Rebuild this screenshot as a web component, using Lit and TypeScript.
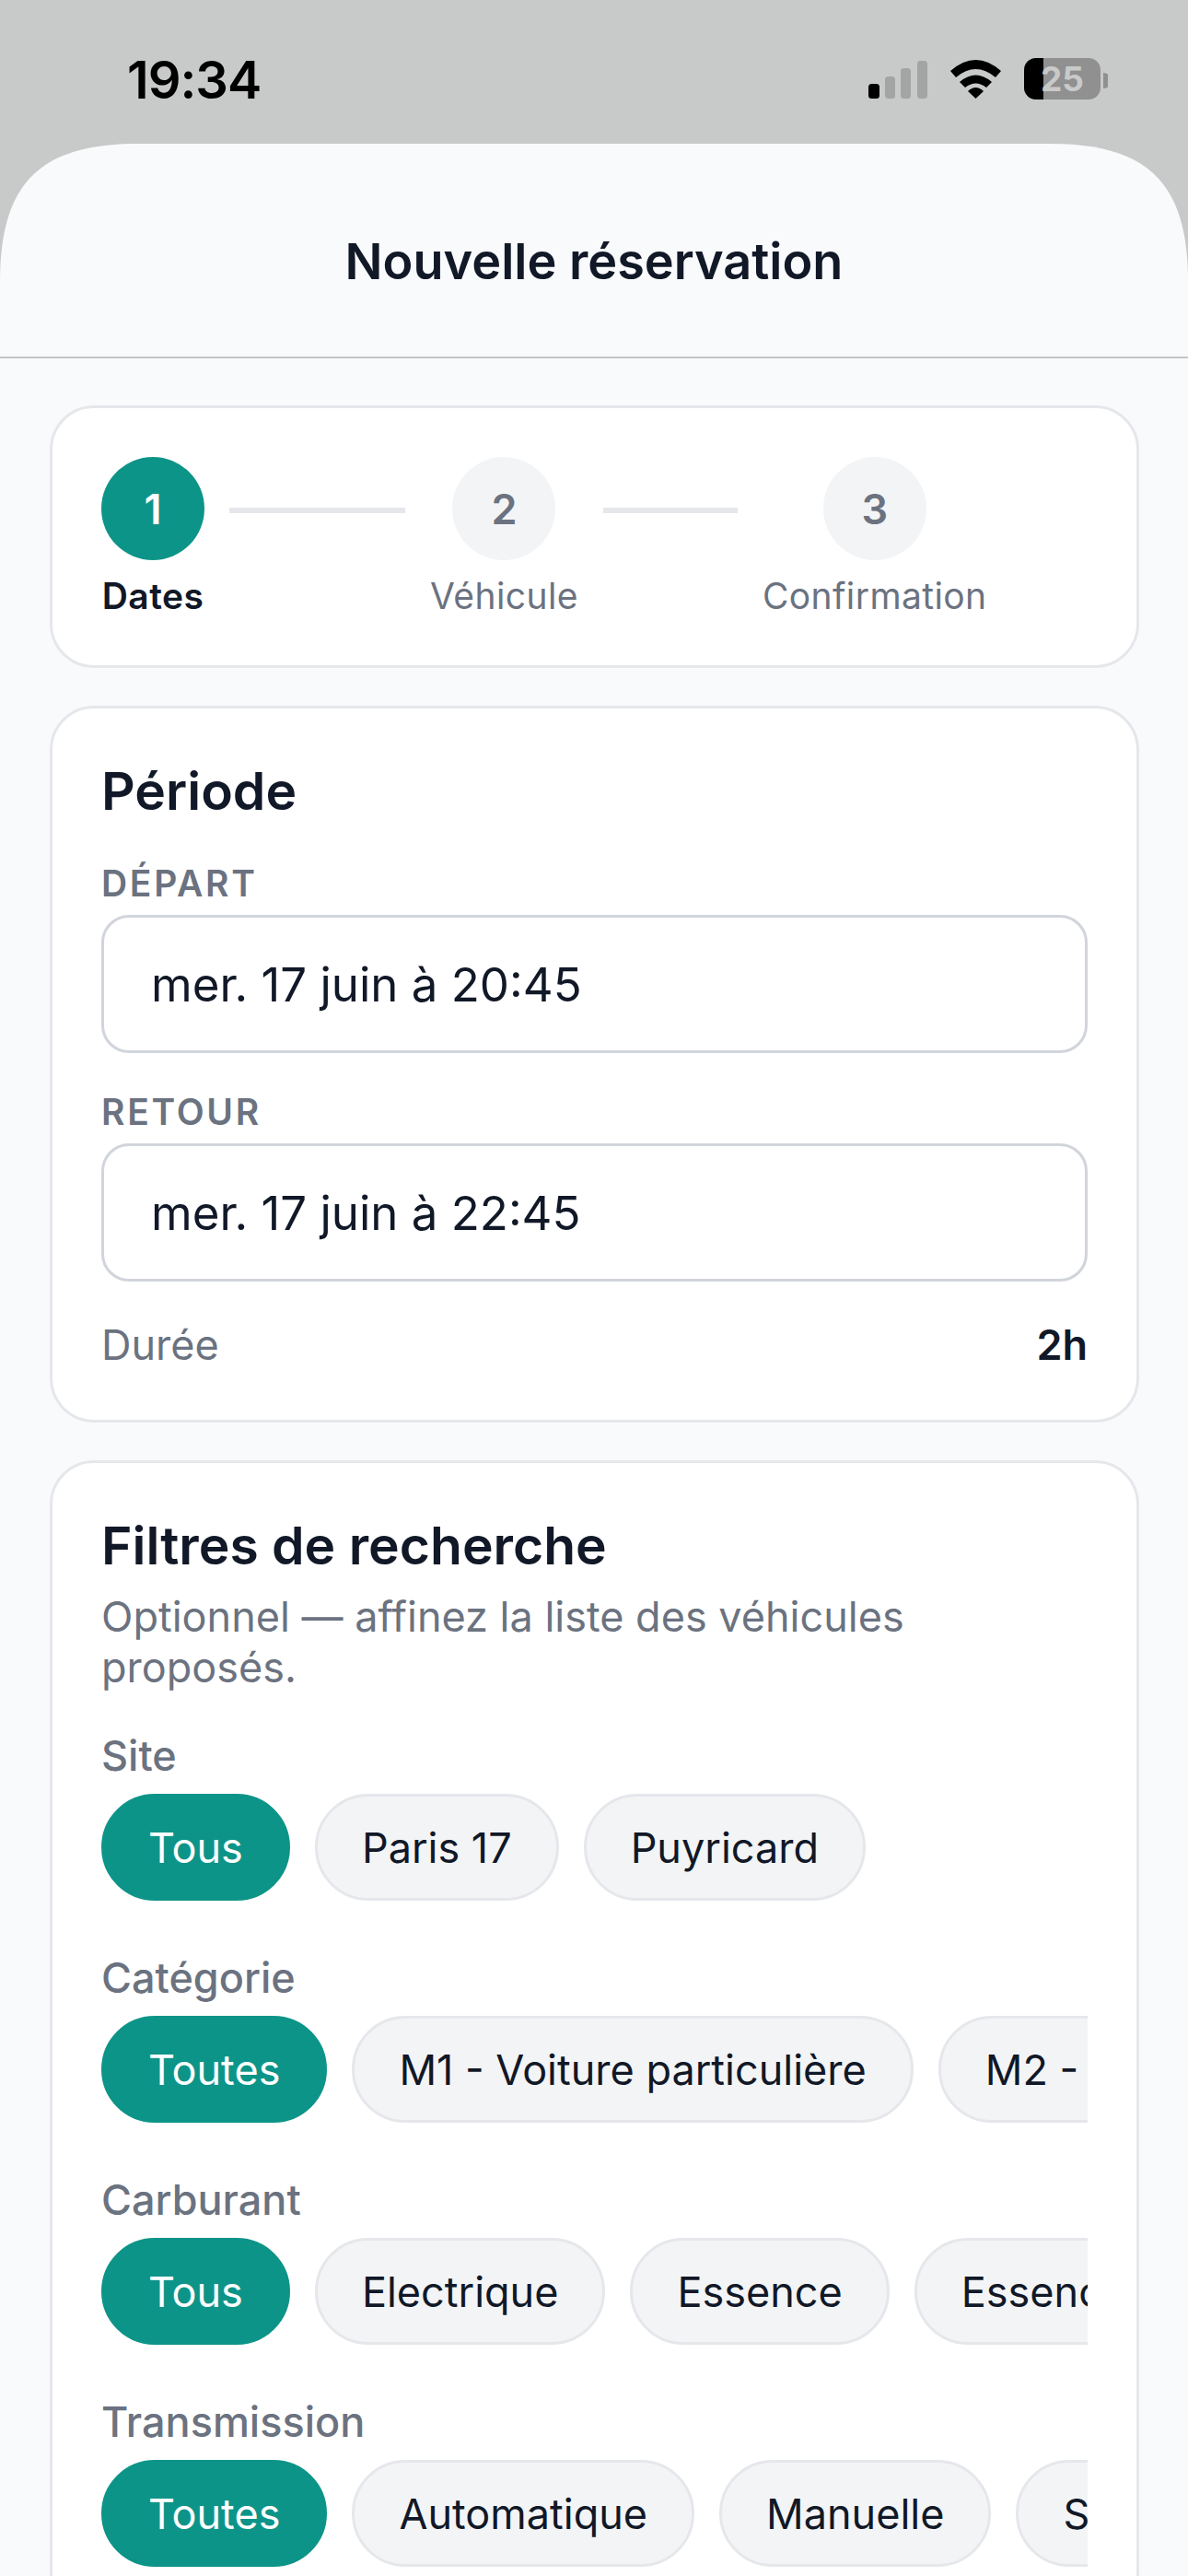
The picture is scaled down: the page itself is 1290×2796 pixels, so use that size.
import { LitElement, html, css } from "lit";
import { customElement } from "lit/decorators.js";

const FILTERS: { label: string; chips: string[] }[] = [
  { label: "Site", chips: ["Tous", "Paris 17", "Puyricard"] },
  { label: "Catégorie", chips: ["Toutes", "M1 - Voiture particulière", "M2 - Minibus"] },
  { label: "Carburant", chips: ["Tous", "Electrique", "Essence", "Essence / Hybride"] },
  { label: "Transmission", chips: ["Toutes", "Automatique", "Manuelle", "Semi-automatique"] },
];

@customElement("app-root")
export class AppRoot extends LitElement {
  static styles = css`
    :host { display: block; width: 1290px; height: 2796px; overflow: hidden; background: #c8cac9; font-family: Inter, "Noto Sans", sans-serif; color: #111827; }
    * { box-sizing: border-box; }
    .status { height: 156px; display: flex; justify-content: space-between; padding: 59px 87px 0 138px; }
    .time { font-size: 56px; font-weight: 600; line-height: 56px; color: #000; letter-spacing: -1px; }
    .icons { display: block; margin-top: 4px; }
    .sheet { height: 2640px; background: #f9fafb; overflow: hidden; clip-path: path("M0 150 C0 43 43 0 150 0 H1140 C1247 0 1290 43 1290 150 V2640 H0 Z"); }
    .head { height: 233px; border-bottom: 2px solid #c4c5c8; display: flex; align-items: center; justify-content: center; font-size: 54px; font-weight: 600; padding-top: 24px; }
    .body { padding: 51px 53px 0 54px; display: flex; flex-direction: column; gap: 41px; }
    .card { background: #fff; border: 3px solid #e5e7eb; border-radius: 48px; padding: 51px 53px; }
    .card.steps { padding-top: 53px; }
    .card.form { padding-top: 54px; }
    .stepper { display: flex; align-items: flex-start; }
    .step { display: flex; flex-direction: column; align-items: center; gap: 15px; }
    .circle { width: 112px; height: 112px; border-radius: 50%; background: #f3f4f6; color: #6b7280; display: flex; align-items: center; justify-content: center; font-size: 45px; font-weight: 600; }
    .step.on .circle { background: #0d9488; color: #fff; }
    .step-label { font-size: 39px; line-height: 48px; color: #6b7280; white-space: nowrap; letter-spacing: 0.4px; }
    .step.on .step-label { color: #111827; font-weight: 600; }
    .line { height: 6px; background: #e5e7eb; margin: 55px 27px 0; flex: none; }
    .line.a { width: 191px; }
    .line.b { width: 146px; }
    h2 { margin: 0; font-size: 57px; line-height: 72px; font-weight: 600; }
    .cap { font-size: 39px; line-height: 48px; font-weight: 600; color: #6b7280; letter-spacing: 2.7px; text-transform: uppercase; margin: 40px 0 10px; }
    .input { height: 150px; border: 3px solid #d1d5db; border-radius: 30px; padding: 0 51px; display: flex; align-items: center; font-size: 51px; background: #fff; }
    .dur { display: flex; justify-content: space-between; align-items: center; margin-top: 39px; font-size: 45px; line-height: 60px; color: #6b7280; }
    .dur b { color: #111827; font-weight: 600; }
    .sub { font-size: 45px; line-height: 55px; color: #6b7280; margin-top: 13px; }
    .group { margin-top: 42px; }
    .group + .group { margin-top: 57px; }
    .glabel { font-size: 45px; line-height: 54px; font-weight: 500; color: #6b7280; margin-bottom: 14px; }
    .chips { display: flex; gap: 27px; overflow: hidden; }
    .chip { flex: none; height: 116px; padding: 0 48px; border: 3px solid #e5e7eb; border-radius: 58px; background: #f3f4f6; display: flex; align-items: center; font-size: 45px; white-space: nowrap; }
    .chip.on { background: #0d9488; border-color: #0d9488; color: #fff; }
  `;

  render() {
    return html`
      <div class="status">
        <div class="time">19:34</div>
        <svg class="icons" width="265" height="50" viewBox="939 63 265 50">
          <rect x="944" y="91" width="12" height="16" rx="3.5" fill="#000"/>
          <rect x="962" y="83" width="11" height="24" rx="3.5" fill="#a3a5a4"/>
          <rect x="979" y="74" width="11" height="33" rx="3.5" fill="#a3a5a4"/>
          <rect x="997" y="66" width="11" height="41" rx="3.5" fill="#a3a5a4"/>
          <path d="M1033 77 Q1060.500 53 1088 77 L1082 84 Q1060.500 66 1039 84 Z" fill="#000"/>
          <path d="M1043 89 Q1060.500 74 1078 89 L1072 95 Q1060.500 86 1049 95 Z" fill="#000"/>
          <path d="M1052 99 Q1060.500 91 1069 99 L1060.500 107 Z" fill="#000"/>
          <rect x="1113" y="63" width="83" height="45" rx="13" fill="#8f908f"/>
          <path d="M1134 63 H1126 A13 13 0 0 0 1113 76 V95 A13 13 0 0 0 1126 108 H1134 Z" fill="#000"/>
          <path d="M1199 79 A8 8 0 0 1 1199 96 Z" fill="#8f908f"/>
          <text x="1154.500" y="99" text-anchor="middle" font-size="37" font-weight="700" fill="#c8cac9" font-family="Inter, sans-serif">25</text>
        </svg>
      </div>
      <div class="sheet">
        <div class="head">Nouvelle réservation</div>
        <div class="body">
          <section class="card steps">
            <div class="stepper">
              <div class="step on"><div class="circle">1</div><div class="step-label">Dates</div></div>
              <div class="line a"></div>
              <div class="step"><div class="circle">2</div><div class="step-label">Véhicule</div></div>
              <div class="line b"></div>
              <div class="step"><div class="circle">3</div><div class="step-label">Confirmation</div></div>
            </div>
          </section>
          <section class="card form">
            <h2>Période</h2>
            <div class="cap">Départ</div>
            <div class="input">mer. 17 juin à 20:45</div>
            <div class="cap">Retour</div>
            <div class="input">mer. 17 juin à 22:45</div>
            <div class="dur"><span>Durée</span><b>2h</b></div>
          </section>
          <section class="card form">
            <h2>Filtres de recherche</h2>
            <div class="sub">Optionnel — affinez la liste des véhicules proposés.</div>
            ${FILTERS.map(
              (f) => html`<div class="group">
                <div class="glabel">${f.label}</div>
                <div class="chips">
                  ${f.chips.map((c, i) => html`<div class="chip ${i === 0 ? "on" : ""}">${c}</div>`)}
                </div>
              </div>`
            )}
          </section>
        </div>
      </div>
    `;
  }
}
